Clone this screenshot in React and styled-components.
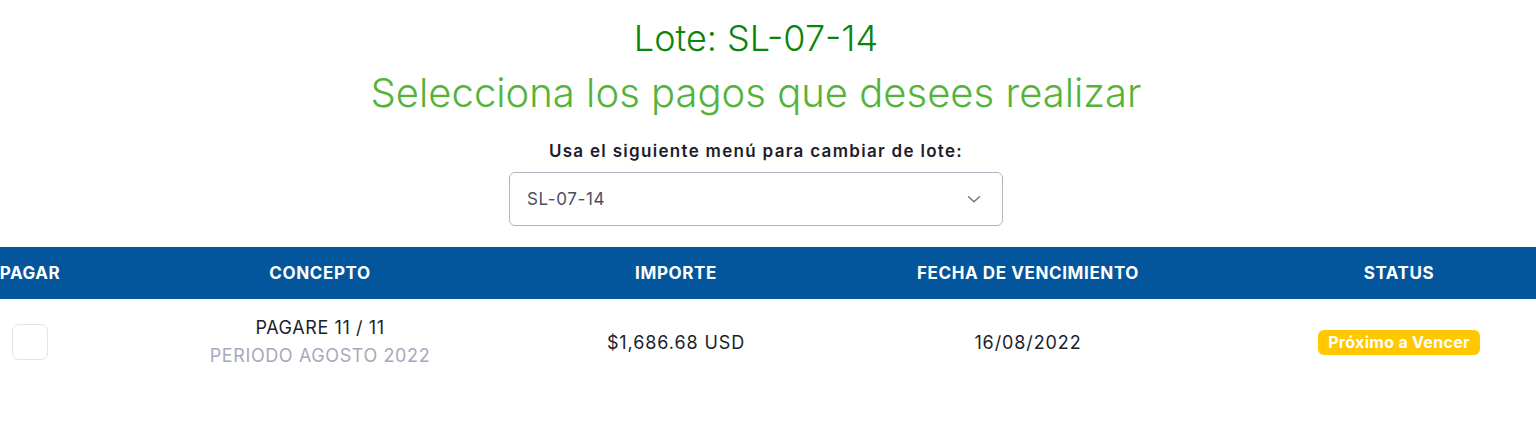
import React from "react";
import styled, { createGlobalStyle } from "styled-components";

const GlobalStyle = createGlobalStyle`
	body {
		margin: 0;
		background: #ffffff;
		font-family: "Inter", "Noto Sans", sans-serif;
		overflow: hidden;
	}
`;

const columns = ["Pagar", "Concepto", "Importe", "Fecha de vencimiento", "Status"];

const rows = [
	{
		concept: "PAGARE 11 / 11",
		period: "PERIODO AGOSTO 2022",
		amount: "$1,686.68 USD",
		due: "16/08/2022",
		status: "Próximo a Vencer",
	},
];

const ChevronDown = () => (
	<svg width="22" height="22" viewBox="0 0 24 24" fill="none" stroke="#70748a" strokeWidth="1.6" strokeLinecap="round" strokeLinejoin="round">
		<path d="M6 9.5l6 5.5 6-5.5" />
	</svg>
);

const App = () => {
	return (
		<Page>
			<GlobalStyle />
			<Top>
				<Heading>
					<LotTitle>Lote: SL-07-14</LotTitle>
					<Subtitle>Selecciona los pagos que desees realizar</Subtitle>
				</Heading>
				<Picker>
					<PickerLabel>Usa el siguiente menú para cambiar de lote:</PickerLabel>
					<Select>
						<SelectValue>SL-07-14</SelectValue>
						<ChevronDown />
					</Select>
				</Picker>
			</Top>
			<Table>
				<HeaderRow>
					{columns.map((col) => (
						<HeaderCell key={col}>{col}</HeaderCell>
					))}
				</HeaderRow>
				{rows.map((row) => (
					<Row key={row.concept}>
						<Cell>
							<Checkbox />
						</Cell>
						<Cell>
							<Concept>{row.concept}</Concept>
							<Concept $muted>{row.period}</Concept>
						</Cell>
						<Cell>
							<Value>{row.amount}</Value>
						</Cell>
						<Cell>
							<Value>{row.due}</Value>
						</Cell>
						<Cell>
							<Badge>{row.status}</Badge>
						</Cell>
					</Row>
				))}
			</Table>
		</Page>
	);
};

export default App;

const Page = styled.div`
	width: 1536px;
	height: 427px;
	display: flex;
	flex-direction: column;
	padding-top: 14px;
	box-sizing: border-box;
`;

const Top = styled.div`
	width: 1512px;
	display: flex;
	flex-direction: column;
	align-items: center;
`;

const Heading = styled.div`
	display: flex;
	flex-direction: column;
	align-items: center;
`;

const LotTitle = styled.h1`
	margin: 0;
	font-weight: 300;
	font-size: 36px;
	line-height: 48px;
	color: #0b840b;
`;

const Subtitle = styled.h2`
	margin: 3px 0 0;
	font-weight: 300;
	font-size: 40px;
	line-height: 56px;
	color: #55b33a;
`;

const Picker = styled.div`
	display: flex;
	flex-direction: column;
	align-items: center;
	gap: 10px;
	margin-top: 19px;
`;

const PickerLabel = styled.label`
	font-weight: 600;
	font-size: 17px;
	line-height: 22px;
	letter-spacing: 1.3px;
	color: #1d1d2b;
`;

const Select = styled.div`
	width: 494px;
	height: 54px;
	box-sizing: border-box;
	display: flex;
	align-items: center;
	justify-content: space-between;
	padding: 0 17px 0 17px;
	border: 1px solid #b4b4c2;
	border-radius: 6px;
	background: #ffffff;
`;

const SelectValue = styled.span`
	font-size: 17px;
	letter-spacing: 0.6px;
	color: #4f4f63;
`;

const Table = styled.div`
	width: 100%;
	margin-top: 21px;
`;

const gridCols = "60px 520px 192px 512px 230px 1fr";

const HeaderRow = styled.div`
	display: grid;
	grid-template-columns: ${gridCols};
	height: 52px;
	align-items: center;
	background: #03569c;
`;

const HeaderCell = styled.div`
	display: flex;
	justify-content: center;
	white-space: nowrap;
	font-weight: 700;
	font-size: 17px;
	letter-spacing: 0.6px;
	text-transform: uppercase;
	color: #ffffff;
`;

const Row = styled.div`
	display: grid;
	grid-template-columns: ${gridCols};
	align-items: center;
	padding: 15px 0;
`;

const Cell = styled.div`
	display: flex;
	flex-direction: column;
	align-items: center;
	justify-content: center;
	white-space: nowrap;
`;

const Checkbox = styled.div`
	width: 36px;
	height: 36px;
	box-sizing: border-box;
	border: 1px solid #e2e3ec;
	border-radius: 7px;
	background: #ffffff;
`;

const Concept = styled.span`
	font-size: 18px;
	line-height: 28px;
	letter-spacing: 0.6px;
	color: ${({ $muted }) => ($muted ? "#a7a9bb" : "#1d1d2b")};
`;

const Value = styled.span`
	font-size: 18px;
	letter-spacing: 0.9px;
	color: #1d1d2b;
`;

const Badge = styled.span`
	display: inline-flex;
	align-items: center;
	height: 25px;
	padding: 0 10px;
	border-radius: 6px;
	background: #ffc800;
	color: #ffffff;
	font-weight: 700;
	font-size: 16px;
	letter-spacing: 0.3px;
`;
